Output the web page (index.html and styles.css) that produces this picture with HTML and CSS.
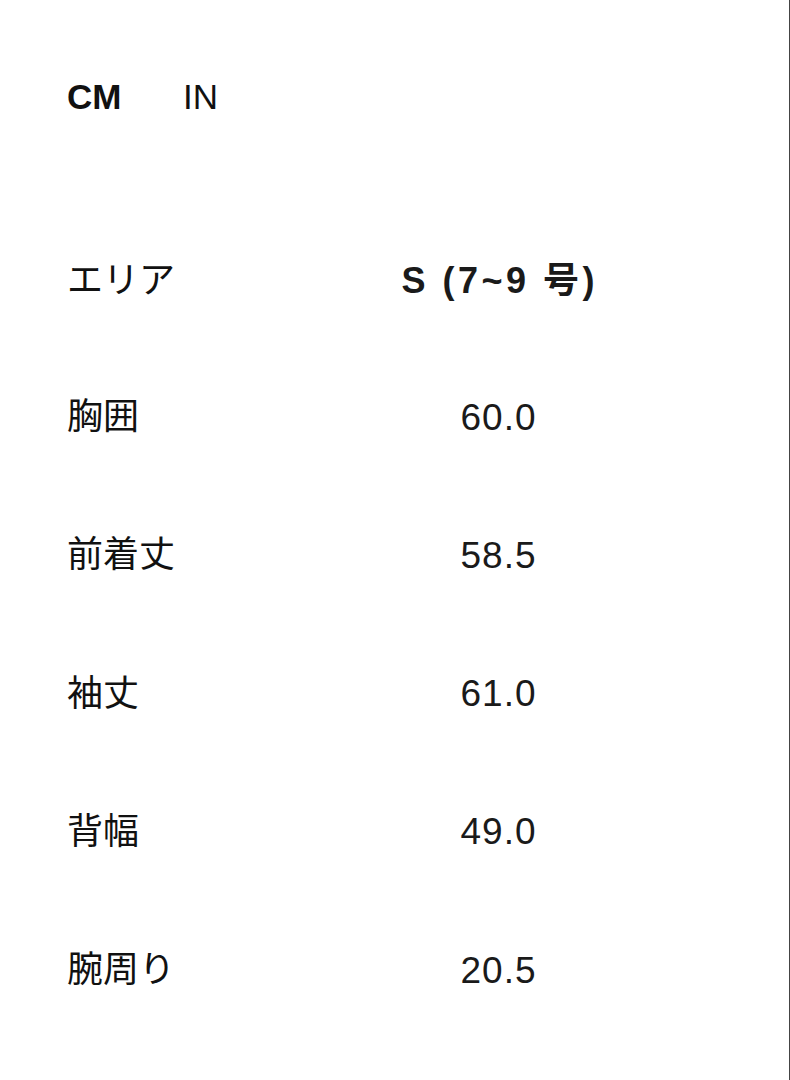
FILE: index.html
```html
<!DOCTYPE html>
<html lang="ja">
<head>
<meta charset="utf-8">
<link rel="stylesheet" href="styles.css">
</head>
<body>
<div class="page">
  <div class="tabs">
    <span class="tab active">CM</span>
    <span class="tab">IN</span>
  </div>
  <div class="table">
    <div class="row head">
      <div class="label">エリア</div>
      <div class="value">S (7~9 号)</div>
    </div>
    <div class="row">
      <div class="label">胸囲</div>
      <div class="value">60.0</div>
    </div>
    <div class="row">
      <div class="label">前着丈</div>
      <div class="value">58.5</div>
    </div>
    <div class="row">
      <div class="label">袖丈</div>
      <div class="value">61.0</div>
    </div>
    <div class="row">
      <div class="label">背幅</div>
      <div class="value">49.0</div>
    </div>
    <div class="row">
      <div class="label">腕周り</div>
      <div class="value">20.5</div>
    </div>
  </div>
</div>
</body>
</html>
```
FILE: styles.css
```css
html, body {
  margin: 0;
  padding: 0;
  background: #ffffff;
}
.page {
  box-sizing: border-box;
  width: 790px;
  height: 1080px;
  border-right: 1px solid #444444;
  padding: 77px 0 0 67px;
  font-family: "Liberation Sans", "Noto Sans CJK JP", sans-serif;
  color: #111111;
}
.tabs {
  display: flex;
  height: 40px;
  line-height: 40px;
  font-size: 35px;
}
.tab {
  width: 116px;
  font-weight: 400;
}
.tab.active {
  font-weight: 700;
}
.table {
  margin-top: 96px;
  display: flex;
  flex-direction: column;
  width: 572px;
}
.row {
  display: grid;
  grid-template-columns: 290px 282px;
  align-items: center;
  height: 138.25px;
  font-size: 37px;
  line-height: 1;
}
.row.head {
  height: 135px;
}
.row.head .value {
  font-weight: 700;
  font-size: 36px;
  letter-spacing: 3.5px;
  padding-left: 3.5px;
}
.label {
  font-size: 36px;
}
.value {
  text-align: center;
  letter-spacing: 1px;
  padding-left: 1px;
  color: #1a1a1a;
}
```
